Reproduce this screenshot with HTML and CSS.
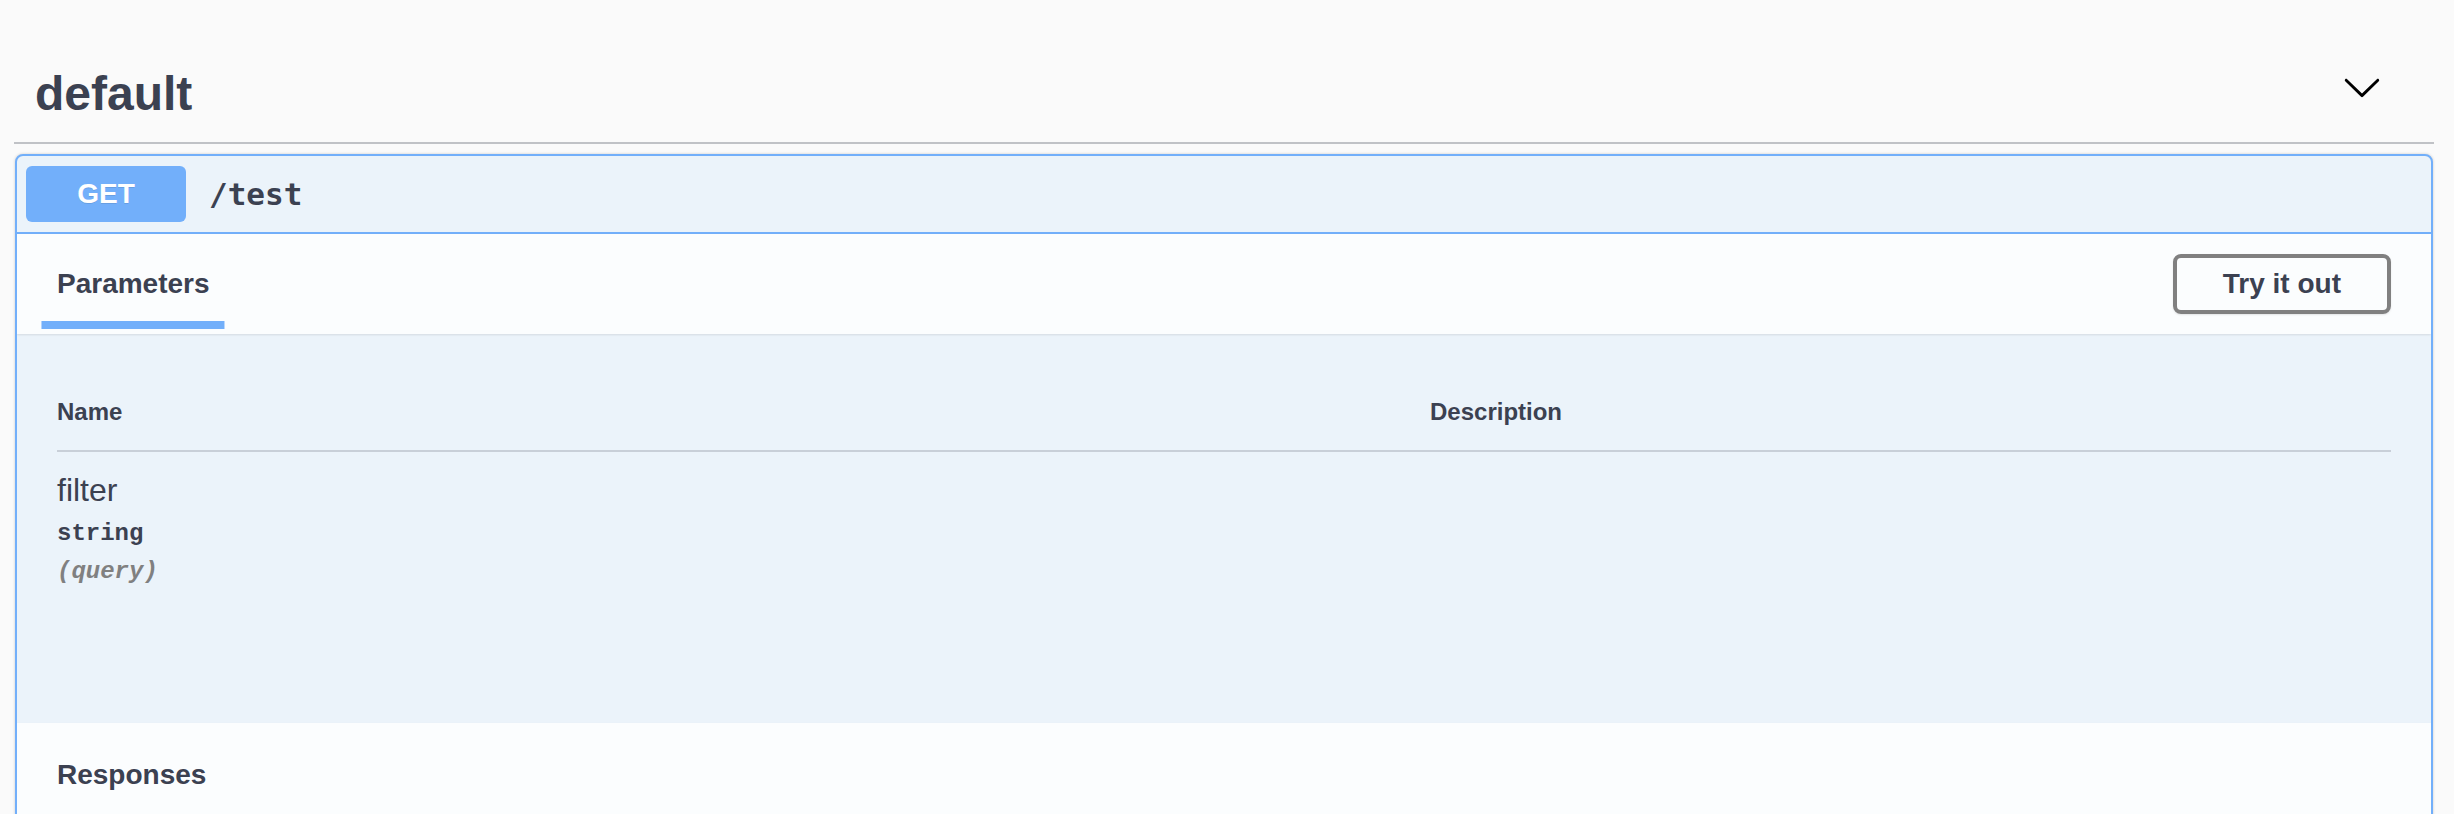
FILE: index.html
```html
<!DOCTYPE html>
<html lang="en">
<head>
<meta charset="utf-8">
<title>Swagger UI</title>
<link rel="stylesheet" href="styles.css">
</head>
<body>
<div class="wrapper">
  <section class="tag-section">
    <div class="tag-header">
      <h3 class="tag-title">default</h3>
      <button class="expand" aria-label="collapse">
        <svg width="40" height="40" viewBox="0 0 20 20" aria-hidden="true">
          <path d="M17.418 6.109c.272-.268.709-.268.979 0s.271.701 0 .969l-7.908 7.83c-.27.268-.707.268-.979 0l-7.908-7.830c-.27-.268-.27-.701 0-.969.271-.268.709-.268.979 0L10 13.25l7.418-7.141z" fill="#000"/>
        </svg>
      </button>
    </div>

    <div class="opblock">
      <div class="summary">
        <span class="method">GET</span>
        <span class="path">/test</span>
      </div>

      <div class="section-header">
        <h4 class="tab"><span class="tab-label">Parameters</span></h4>
        <button class="btn-try">Try it out</button>
      </div>

      <div class="params-body">
        <div class="params-table">
          <div class="th">Name</div>
          <div class="th">Description</div>
          <div class="td name-cell">
            <div class="param-name">filter</div>
            <div class="param-type">string</div>
            <div class="param-in">(query)</div>
          </div>
          <div class="td"></div>
        </div>
      </div>

      <div class="section-header responses-header">
        <h4 class="tab">Responses</h4>
      </div>
    </div>
  </section>
</div>
</body>
</html>
```

FILE: styles.css
```css
html, body {
  margin: 0;
  padding: 0;
}

body {
  background: #fafafa;
  color: #3b4151;
  font-family: "Liberation Sans", Arial, sans-serif;
  overflow: hidden;
}

.wrapper {
  padding: 46px 20px 0 14px;
}

.tag-header {
  display: flex;
  align-items: center;
  justify-content: space-between;
  padding: 20px 52px 21px 21px;
  border-bottom: 2px solid rgba(59, 65, 81, 0.3);
  margin-bottom: 10px;
}

.tag-title {
  margin: 0;
  font-size: 48px;
  line-height: 55px;
  font-weight: 700;
  color: #3b4151;
}

.expand {
  border: none;
  background: none;
  padding: 0;
  width: 40px;
  height: 40px;
  margin-bottom: 13px;
  display: flex;
}

.opblock {
  margin: 0 1px;
  border: 2px solid #72affa;
  border-radius: 8px;
  background: #ebf3fa;
  box-shadow: 0 0 3px rgba(0, 0, 0, 0.19);
  overflow: hidden;
}

.summary {
  display: flex;
  align-items: center;
  padding: 10px 9px;
  border-bottom: 2px solid #72affa;
}

.method {
  width: 160px;
  padding: 12px 0;
  border-radius: 6px;
  background: #72affa;
  color: #fff;
  font-size: 28px;
  line-height: 32px;
  font-weight: 700;
  text-align: center;
  text-shadow: 0 1px 0 rgba(0, 0, 0, 0.1);
}

.path {
  padding-left: 23px;
  font-family: "DejaVu Sans Mono", "Liberation Mono", monospace;
  font-weight: 700;
  font-size: 31px;
  color: #3b4151;
}

.section-header {
  box-sizing: border-box;
  min-height: 100px;
  display: flex;
  align-items: center;
  justify-content: space-between;
  padding: 16px 40px;
  background: rgba(255, 255, 255, 0.8);
  box-shadow: 0 1px 2px rgba(0, 0, 0, 0.1);
}

.responses-header {
  padding-top: 20px;
}

.tab {
  margin: 0;
  font-size: 28px;
  font-weight: 700;
  color: #3b4151;
}

.tab-label {
  position: relative;
}

.tab-label::after {
  content: "";
  position: absolute;
  left: 50%;
  bottom: -30px;
  width: 120%;
  height: 8px;
  background: #72affa;
  transform: translateX(-50%);
}

.btn-try {
  padding: 10px 46px;
  border: 4px solid #808080;
  border-radius: 8px;
  background: transparent;
  color: #3b4151;
  font-family: "Liberation Sans", Arial, sans-serif;
  font-size: 28px;
  line-height: 32px;
  font-weight: 700;
  box-shadow: 0 1px 2px rgba(0, 0, 0, 0.1);
}

.params-body {
  padding: 40px 40px 118px;
}

.params-table {
  display: grid;
  grid-template-columns: 1373px 1fr;
}

.th {
  padding: 24px 0;
  font-size: 24px;
  font-weight: 700;
  border-bottom: 2px solid rgba(59, 65, 81, 0.2);
}

.td {
  padding: 20px 0;
}

.param-name {
  font-size: 32px;
  font-weight: 400;
}

.param-type {
  padding: 11px 0;
  font-family: "Liberation Mono", "Courier New", monospace;
  font-size: 24px;
  font-weight: 700;
}

.param-in {
  font-family: "Liberation Mono", "Courier New", monospace;
  font-size: 24px;
  font-weight: 700;
  font-style: italic;
  color: #808080;
}
```
